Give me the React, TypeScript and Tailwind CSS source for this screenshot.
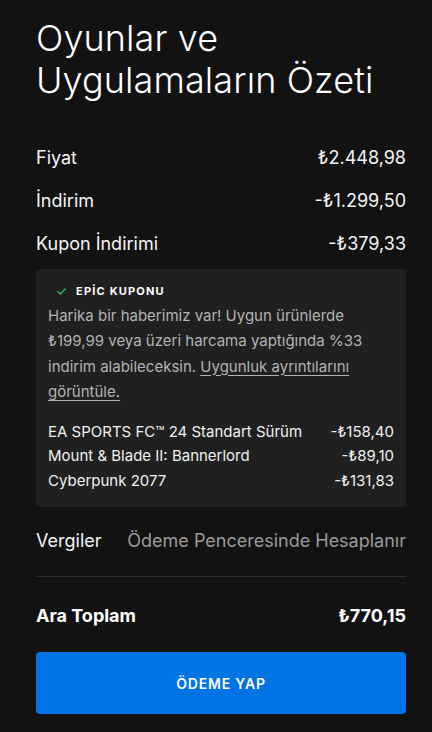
import React from 'react';

const items = [
  { name: 'EA SPORTS FC™ 24 Standart Sürüm', price: '-₺158,40' },
  { name: 'Mount & Blade II: Bannerlord', price: '-₺89,10' },
  { name: 'Cyberpunk 2077', price: '-₺131,83' },
];

const CheckIcon = () => (
  <svg width="9" height="9" viewBox="0 0 10 10" fill="none" className="shrink-0">
    <path d="M1 5.2 L3.8 7.8 L9 2.2" stroke="#2fbf71" strokeWidth="1.4" strokeLinecap="round" strokeLinejoin="round" />
  </svg>
);

const Row = ({ label, value }: { label: string; value: string }) => (
  <div className="flex items-center justify-between h-[43px] text-[18px] text-[#f5f5f5]">
    <span>{label}</span>
    <span>{value}</span>
  </div>
);

export default function App() {
  return (
    <div className="min-h-[732px] w-full bg-[#121212] pl-9 pr-[26px] pt-[17px] font-['Inter',_sans-serif]">
      <h1 className="text-[36px] leading-[42px] font-light text-white tracking-[0.1px]">
        Oyunlar ve Uygulamaların Özeti
      </h1>

      <div className="mt-[35px] flex flex-col">
        <Row label="Fiyat" value="₺2.448,98" />
        <Row label="İndirim" value="-₺1.299,50" />
        <Row label="Kupon İndirimi" value="-₺379,33" />
      </div>

      <div className="mt-[4px] rounded bg-[#202020] px-3 pt-[14px] pb-[14px]">
        <div className="flex items-center gap-[10px] pl-[9px] text-[11px] font-bold tracking-[1.2px] text-white">
          <CheckIcon />
          <span>EPİC KUPONU</span>
        </div>
        <p className="mt-[3px] text-[15px] leading-[25.5px] text-[#b3b3b3]">
          Harika bir haberimiz var! Uygun ürünlerde ₺199,99 veya üzeri harcama yaptığında %33 indirim alabileceksin.{' '}
          <a className="underline underline-offset-[3px]">Uygunluk ayrıntılarını görüntüle.</a>
        </p>
        <div className="mt-[15px] flex flex-col">
          {items.map((it) => (
            <div key={it.name} className="flex items-center justify-between h-[24.5px] text-[15px] text-[#f0f0f0]">
              <span>{it.name}</span>
              <span>{it.price}</span>
            </div>
          ))}
        </div>
      </div>

      <div className="mt-[20px] flex items-center justify-between h-[26px] text-[18px]">
        <span className="text-[#f5f5f5]">Vergiler</span>
        <span className="text-[#9a9a9a]">Ödeme Penceresinde Hesaplanır</span>
      </div>

      <div className="mt-[23px] h-px bg-[#2c2c2c]" />

      <div className="mt-[25px] flex items-center justify-between h-[26px] text-[18px] font-bold text-white">
        <span>Ara Toplam</span>
        <span>₺770,15</span>
      </div>

      <button className="mt-[24px] w-full h-[62px] rounded bg-[#0074e4] text-[14px] font-semibold tracking-[0.8px] text-white">
        ÖDEME YAP
      </button>
    </div>
  );
}
